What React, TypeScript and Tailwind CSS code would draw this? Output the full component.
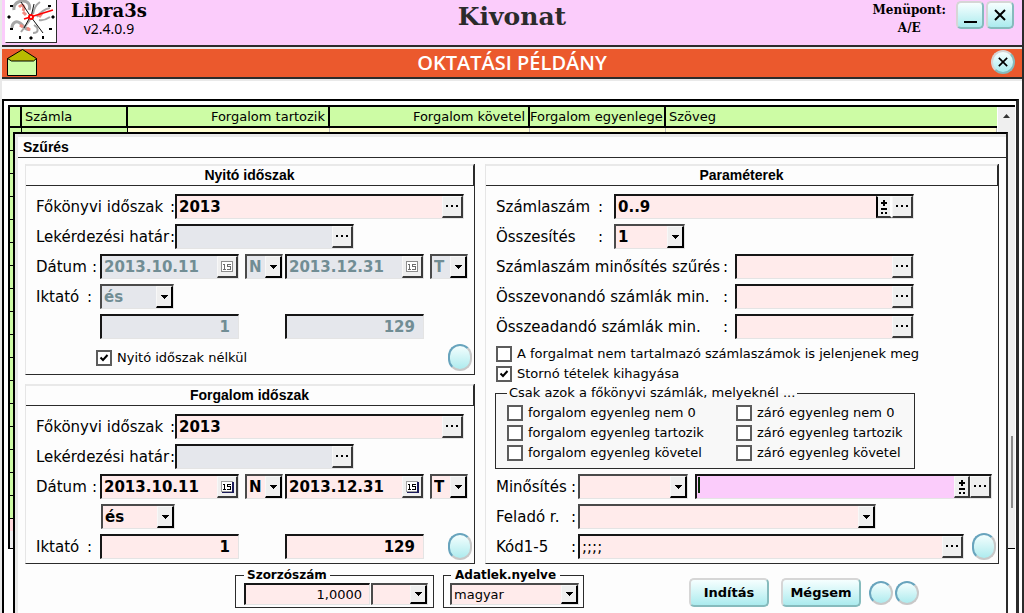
import React, { useId } from 'react';
import { clsx } from 'clsx';

const Glyph = {
  Dots: () => (
    <svg width="13" height="3" viewBox="0 0 13 3" fill="currentColor" shapeRendering="crispEdges">
      <path d="M0 0h2v2H0zM5 0h2v2H5zM10 0h2v2h-2z" />
    </svg>
  ),
  Calendar: ({ dim }: { dim?: boolean }) => (
    <svg width="13" height="12" viewBox="0 0 13 12" fill="none" shapeRendering="crispEdges">
      <rect x="0.5" y="0.5" width="11" height="10" fill="#fff" stroke={dim ? '#8c8c8c' : '#a0a0a0'} />
      {!dim && <path d="M1 11h11V1M11 1v10" stroke="#1b1b5a" />}
      <path
        d="M2 3.5h2M3.5 3v6M2 8.5h3M10 3.5H6.5V5.5H9.500V8.5H6"
        stroke={dim ? '#6d6d6d' : '#000'}
      />
    </svg>
  ),
  PlusMinus: () => (
    <svg width="8" height="16" viewBox="0 0 8 16" fill="currentColor" shapeRendering="crispEdges">
      <path d="M3 1h2v2h2v2H5v2H3V5H1V3h2zM1 9h6v2H1zM1 13h2v2H1zM5 13h2v2H5z" />
    </svg>
  ),
  Down: () => (
    <svg width="7" height="4" viewBox="0 0 7 4" fill="#000" shapeRendering="crispEdges">
      <path d="M0 0h7L3.5 4z" />
    </svg>
  ),
};

const raised =
  'flex items-center justify-center bg-[#efefef] border-t border-r-2 border-b-2 border-l border-t-[#f8f8f8] border-r-[#3a3a3a] border-b-[#3a3a3a] border-l-[#f8f8f8]';

const sunken =
  'flex h-[25px] shrink-0 border-t-2 border-l-2 border-r border-b border-t-[#161616] border-l-[#161616] border-r-[#e4e4e4] border-b-[#e4e4e4]';

type FieldProps = {
  label: string;
  id?: string;
  value?: string;
  kind?: 'plain' | 'dots' | 'date' | 'both';
  disabled?: boolean;
  right?: boolean;
  light?: boolean;
  active?: boolean;
  className?: string;
};

const Field: React.FC<FieldProps> = ({
  label,
  id,
  value = '',
  kind = 'plain',
  disabled,
  right,
  light,
  active,
  className,
}) => (
  <div
    className={clsx(
      sunken,
      disabled ? 'bg-[#e5e7ec]' : active ? 'bg-[#fbccfb]' : 'bg-[#ffebeb]',
      className,
    )}
  >
    <input
      id={id}
      aria-label={id ? undefined : label}
      defaultValue={value}
      disabled={disabled}
      className={clsx(
        'w-0 min-w-0 flex-1 bg-transparent pb-px text-[15px] outline-none',
        right ? 'pr-2 text-right' : 'pl-[2px]',
        !light && 'font-bold',
        disabled ? 'text-[#718d94]' : 'text-black',
        active ? 'mt-px ml-px h-4 border-l-2 border-[#062b06]' : 'h-full',
      )}
    />
    {kind === 'both' && (
      <button
        type="button"
        aria-label={`${label} +/-`}
        className={clsx(raised, 'w-4', !active && 'border-l-2 border-l-black border-r-white')}
      >
        <Glyph.PlusMinus />
      </button>
    )}
    {(kind === 'dots' || kind === 'both') && (
      <button type="button" aria-label={`${label} ...`} className={clsx(raised, 'w-[21px]')}>
        <Glyph.Dots />
      </button>
    )}
    {kind === 'date' && (
      <button
        type="button"
        aria-label={`${label} naptár`}
        disabled={disabled}
        className={clsx(raised, 'w-[21px]')}
      >
        <Glyph.Calendar dim={disabled} />
      </button>
    )}
  </div>
);

type DropProps = {
  label: string;
  id?: string;
  value?: string;
  disabled?: boolean;
  small?: boolean;
  className?: string;
};

const Drop: React.FC<DropProps> = ({ label, id, value = '', disabled, small, className }) => (
  <div
    className={clsx(
      'relative flex shrink-0 border-t-2 border-r border-b border-l-2 border-t-[#4a4a4a] border-r-[#e4e4e4] border-b-[#e4e4e4] border-l-[#4a4a4a]',
      disabled ? 'bg-[#e5e7ec]' : 'bg-[#ffebeb]',
      small ? 'h-[22px]' : 'h-[25px]',
      className,
    )}
  >
    <select
      id={id}
      aria-label={id ? undefined : label}
      disabled={disabled}
      className={clsx(
        'h-full w-full appearance-none bg-transparent pl-[2px] opacity-100 outline-none',
        small ? 'text-[13px]' : 'text-[15px] font-bold',
        disabled ? 'text-[#718d94]' : 'text-black',
      )}
    >
      <option>{value}</option>
    </select>
    <span
      className={clsx(
        raised,
        'pointer-events-none absolute inset-y-0 right-0 w-[17px] border-r-black border-b-black',
      )}
    >
      <Glyph.Down />
    </span>
  </div>
);

const Label: React.FC<{ htmlFor?: string; text: string; className?: string }> = ({
  htmlFor,
  text,
  className,
}) => (
  <label
    htmlFor={htmlFor}
    className={clsx(
      'flex shrink-0 justify-between pt-px text-[15px] leading-6 whitespace-nowrap',
      className,
    )}
  >
    <span>{text}</span>
    <span>:</span>
  </label>
);

const Check: React.FC<{ label: string; checked?: boolean }> = ({ label, checked }) => (
  <label className="flex h-5 items-center gap-[5px] text-[13px] whitespace-nowrap">
    <span className="grid shrink-0">
      <input
        type="checkbox"
        defaultChecked={checked}
        className="peer col-start-1 row-start-1 size-4 appearance-none border-2 border-[#5c5c5c] bg-white"
      />
      <svg
        viewBox="0 0 16 16"
        className="pointer-events-none invisible col-start-1 row-start-1 size-4 peer-checked:visible"
      >
        <path d="M4.500 7.500l2.500 2.500 4.500-5" fill="none" stroke="#000" strokeWidth="2" />
      </svg>
    </span>
    {label}
  </label>
);

const Round: React.FC<{ label: string; className?: string }> = ({ label, className }) => (
  <button
    type="button"
    aria-label={label}
    className={clsx(
      'w-6 shrink-0 rounded-full border-2 border-t-[#68a4bd] border-r-[#c8c8c8] border-b-[#c8c8c8] border-l-[#68a4bd] bg-gradient-to-b from-[#f3fefe] to-[#adebee]',
      className,
    )}
  />
);

const glossy =
  'border-2 border-t-[#d6d6d6] border-l-[#d6d6d6] border-r-[#86bbbd] border-b-[#86bbbd] bg-gradient-to-b from-[#f6ffff] to-[#abebee]';

const Panel: React.FC<{ title: string; children: React.ReactNode }> = ({ title, children }) => (
  <section className="flex flex-col border-r border-b border-l border-r-[#2b2b2b] border-b-[#2b2b2b] border-l-[#e6e6e6]">
    <h2 className="h-[22px] border-t-2 border-r border-b border-t-[#e9e9e9] border-r-[#2b2b2b] border-b-[#2b2b2b] text-center font-['Liberation_Sans',sans-serif] text-[14px] leading-[19px] font-bold">
      {title}
    </h2>
    <div className="flex flex-1 flex-col gap-[5px] pt-2 pl-[10px]">{children}</div>
  </section>
);

const Row: React.FC<{ children: React.ReactNode }> = ({ children }) => (
  <div className="flex h-[25px] items-center">{children}</div>
);

const PeriodRows: React.FC<{ disabled?: boolean }> = ({ disabled }) => {
  const id = useId();
  return (
    <>
      <Row>
        <Label htmlFor={`${id}-p`} text="Főkönyvi időszak" className="w-[139px]" />
        <Field id={`${id}-p`} label="Főkönyvi időszak" value="2013" kind="dots" className="w-[289px]" />
      </Row>
      <Row>
        <Label htmlFor={`${id}-l`} text="Lekérdezési határ" className="w-[139px]" />
        <Field id={`${id}-l`} label="Lekérdezési határ" kind="dots" disabled className="w-[179px]" />
      </Row>
      <Row>
        <Label htmlFor={`${id}-d`} text="Dátum" className="w-[61px]" />
        <Field
          id={`${id}-d`}
          label="Dátum"
          value="2013.10.11"
          kind="date"
          disabled={disabled}
          className="ml-[3px] w-[139px]"
        />
        <Drop label="Nyitó/napi" value="N" disabled={disabled} className="ml-[6px] w-[38px]" />
        <Field
          label="Dátum vége"
          value="2013.12.31"
          kind="date"
          disabled={disabled}
          className="ml-[2px] w-[139px]"
        />
        <Drop label="Tétel" value="T" disabled={disabled} className="ml-[6px] w-[38px]" />
      </Row>
    </>
  );
};

const Logo = () => (
  <svg viewBox="0 0 50 42" className="h-[42px] w-[50px]" fill="none">
    <rect width="50" height="42" fill="#fff" />
    <g stroke="#a6a6a6" strokeWidth="2">
      <path d="M8 10c-1-6 4-9 9-9s8 4 6 9" strokeWidth="3" />
      <path d="M6 28c0-5 4-8 8-5s6 8 10 6" strokeWidth="3" />
      <path d="M27 14c1-7 4-10 7-12M31 17c4-6 8-8 13-9M33 20c5 1 8-1 11-3" />
      <path d="M24 20l-9 12M28 25c5 3 5 8-1 8" />
    </g>
    <path d="M13 7c4-4 6 0 4 4M17 12l3 3M36 13l-3 4M14 25l3 2M21 28l3 2" stroke="#f28a80" strokeWidth="3" />
    <path d="M25 17L37 33M25 17L15 2M25 17l3-13M24 17l-6 11" stroke="#111" />
    <path d="M18 19L47 10" stroke="#f00" strokeWidth="1.500" />
    <circle cx="25" cy="17" r="2" fill="#fff" stroke="#f00" strokeWidth="2" />
    <g fill="#000">
      <path d="M1 17l2-2 2 2-2 2zM45 17l2-2 2 2-2 2zM23 38l2-2 2 2-2 2z" />
      <path d="M4 5h3v2H4zM42 5h3v2h-3zM4 28h3v2H4zM43 28h3v2h-3zM13 36h2v3h-2zM36 36h2v3h-2z" />
    </g>
  </svg>
);

const Envelope = () => (
  <svg width="30" height="28" viewBox="0 0 30 28" stroke="#000">
    <path d="M.5 9.500h29v17H.5z" fill="#cdfca5" />
    <path d="M.5 9.500L15.500 .5l14 9-3 2.500h-22z" fill="#b8bb00" />
  </svg>
);

const Cross: React.FC<{ size: string }> = ({ size }) => (
  <svg viewBox="0 0 12 12" className={size}>
    <path d="M1 1l10 10M11 1L1 11" stroke="#000" strokeWidth="2" />
  </svg>
);

const columns = [
  { title: '', className: 'w-[12px]' },
  { title: 'Számla', className: 'w-[106px] pl-[3px] text-left' },
  { title: 'Forgalom tartozik', className: 'w-[202px] pr-[3px] text-right' },
  { title: 'Forgalom követel', className: 'w-[200px] pr-[3px] text-right' },
  { title: 'Forgalom egyenlege', className: 'w-[136px] text-left' },
  { title: 'Szöveg', className: 'pl-[3px] text-left' },
];

const bookRows = Array.from({ length: 17 }, (_, i) => i);

const AccountTable = () => (
  <table className="w-full table-fixed border-separate border-spacing-0 text-[13px]">
    <thead>
      <tr className="h-[21px] bg-[#cdfca5]">
        {columns.map((col, i) => (
          <th
            key={i}
            className={clsx(
              'overflow-hidden border-b-2 border-black p-0 pt-px leading-[18px] font-normal whitespace-nowrap',
              i < columns.length - 1 && 'border-r-2',
              col.className,
            )}
          >
            {col.title}
          </th>
        ))}
      </tr>
    </thead>
    <tbody>
      {bookRows.map((row) => (
        <tr key={row} className="h-[23px]">
          {columns.map((col, i) => (
            <td
              key={i}
              className={clsx(
                'border-b border-b-black p-0',
                i < 2 ? 'border-r border-r-black bg-[#cdfca5]' : 'border-r border-r-[#bdbdbd] bg-[#ffffd2]',
              )}
            />
          ))}
        </tr>
      ))}
    </tbody>
  </table>
);

const Header = () => (
  <header className="grid h-[47px] grid-cols-[1fr_auto_1fr] items-start border-b-2 border-[#2b2b2b] bg-[#fbccfb]">
    <div className="flex">
      <div className="ml-[3px] border-r border-b border-l border-r-[#2b2b2b] border-b-[#2b2b2b] border-l-white">
        <Logo />
      </div>
      <div className="ml-[14px] text-center">
        <h1 className="font-['DejaVu_Serif',serif] text-[18px] leading-[22px] font-bold">Libra3s</h1>
        <p className="font-['Noto_Sans',sans-serif] text-[14px] leading-[14px]">v2.4.0.9</p>
      </div>
    </div>
    <h2 className="font-['DejaVu_Serif',serif] text-[25px] leading-[34px] font-bold text-[#2b2b2b]">
      Kivonat
    </h2>
    <div className="flex justify-end gap-[2px] pr-[8px]">
      <p className="mr-[8px] pt-px text-center font-['DejaVu_Serif',serif] text-[12px] leading-[18px] font-bold">
        Menüpont:
        <br />
        A/E
      </p>
      <button
        type="button"
        aria-label="Kis méret"
        className={clsx(glossy, 'mt-px flex h-7 w-7 items-end justify-center rounded-[5px] pb-1')}
      >
        <span className="h-[2px] w-[13px] bg-black" />
      </button>
      <button
        type="button"
        aria-label="Bezárás"
        className={clsx(glossy, 'mt-px flex h-7 w-7 items-center justify-center rounded-[5px]')}
      >
        <Cross size="size-3" />
      </button>
    </div>
  </header>
);

const Banner = () => (
  <div className="grid h-8 grid-cols-[1fr_auto_1fr] border-t-2 border-b-2 border-t-[#e9e9e9] border-b-[#2b2b2b] bg-[#eb592d]">
    <div className="pl-[5px]">
      <Envelope />
    </div>
    <strong className="font-['Open_Sans',sans-serif] text-[20px] leading-[27px] font-semibold text-white">
      OKTATÁSI PÉLDÁNY
    </strong>
    <div className="flex justify-end pt-px pr-[7px]">
      <button
        type="button"
        aria-label="Sáv bezárása"
        className={clsx(glossy, 'flex size-6 items-center justify-center rounded-full')}
      >
        <Cross size="size-[10px]" />
      </button>
    </div>
  </div>
);

const Parameters = () => {
  const id = useId();
  return (
    <Panel title="Paraméterek">
      <Row>
        <Label htmlFor={`${id}-a`} text="Számlaszám" className="w-[107px]" />
        <Field
          id={`${id}-a`}
          label="Számlaszám"
          value="0..9"
          kind="both"
          className="ml-[11px] w-[300px]"
        />
      </Row>
      <Row>
        <Label htmlFor={`${id}-b`} text="Összesítés" className="w-[107px]" />
        <Drop id={`${id}-b`} label="Összesítés" value="1" className="ml-[11px] w-[71px]" />
      </Row>
      <Row>
        <Label htmlFor={`${id}-c`} text="Számlaszám minősítés szűrés" className="w-[232px]" />
        <Field id={`${id}-c`} label="Számlaszám minősítés szűrés" kind="dots" className="ml-[7px] w-[179px]" />
      </Row>
      <Row>
        <Label htmlFor={`${id}-d`} text="Összevonandó számlák min." className="w-[232px]" />
        <Field id={`${id}-d`} label="Összevonandó számlák min." kind="dots" className="ml-[7px] w-[179px]" />
      </Row>
      <Row>
        <Label htmlFor={`${id}-e`} text="Összeadandó számlák min." className="w-[232px]" />
        <Field id={`${id}-e`} label="Összeadandó számlák min." kind="dots" className="ml-[7px] w-[179px]" />
      </Row>
      <div>
        <Check label="A forgalmat nem tartalmazó számlaszámok is jelenjenek meg" />
        <Check label="Stornó tételek kihagyása" checked />
        <fieldset className="-ml-px h-[85px] w-[419px] border border-[#2b2b2b] bg-[#f8f8f8] px-[11px] pt-px">
          <legend className="h-[18px] px-[2px] text-[13px] leading-[18px]">
            Csak azok a főkönyvi számlák, melyeknél ...
          </legend>
          <div className="grid grid-cols-[229px_auto]">
            <Check label="forgalom egyenleg nem 0" />
            <Check label="záró egyenleg nem 0" />
            <Check label="forgalom egyenleg tartozik" />
            <Check label="záró egyenleg tartozik" />
            <Check label="forgalom egyenleg követel" />
            <Check label="záró egyenleg követel" />
          </div>
        </fieldset>
      </div>
      <Row>
        <Label htmlFor={`${id}-f`} text="Minősítés" className="w-[80px]" />
        <Drop id={`${id}-f`} label="Minősítés" className="ml-[2px] w-[110px]" />
        <Field label="Minősítés értéke" kind="both" active className="ml-[7px] w-[297px]" />
      </Row>
      <Row>
        <Label htmlFor={`${id}-g`} text="Feladó r." className="w-[80px]" />
        <Drop id={`${id}-g`} label="Feladó r." className="ml-[2px] w-[298px]" />
      </Row>
      <Row>
        <Label htmlFor={`${id}-h`} text="Kód1-5" className="w-[80px]" />
        <Field id={`${id}-h`} label="Kód1-5" value=";;;;" kind="dots" light className="ml-[2px] w-[386px]" />
        <Round label="Paraméterek törlése" className="ml-2 h-[27px]" />
      </Row>
    </Panel>
  );
};

const Footer = () => (
  <div className="mt-[3px] flex items-start pl-[210px]">
    <fieldset className="flex h-[41px] w-[199px] border border-[#2b2b2b] pl-2">
      <legend className="h-4 px-[3px] text-[12px] leading-4 font-bold">Szorzószám</legend>
      <div className="flex">
        <div className="flex h-[22px] w-[126px] border-t-2 border-r border-b border-l-2 border-t-[#161616] border-r-[#e4e4e4] border-b-[#e4e4e4] border-l-[#161616] bg-[#ffebeb]">
          <input
            aria-label="Szorzószám"
            defaultValue="1,0000"
            className="w-full bg-transparent pr-[7px] text-right text-[13px] outline-none"
          />
        </div>
        <Drop label="Szorzószám egysége" small className="ml-px w-[57px]" />
      </div>
    </fieldset>
    <fieldset className="ml-[9px] flex h-[41px] w-[141px] border border-[#2b2b2b] pl-[6px]">
      <legend className="ml-[1px] h-4 px-[4px] text-[12px] leading-4 font-bold">Adatlek.nyelve</legend>
      <Drop label="Adatlek.nyelve" value="magyar" small className="w-[129px]" />
    </fieldset>
    <div className="ml-[105px] flex items-center gap-3 pt-[11px]">
      {['Indítás', 'Mégsem'].map((text) => (
        <button
          key={text}
          type="button"
          className={clsx(glossy, 'h-[29px] w-20 rounded-[5px] text-[13px] font-bold')}
        >
          {text}
        </button>
      ))}
      <div className="-ml-1 flex gap-[2px]">
        <Round label="Mentés" className="h-6" />
        <Round label="Betöltés" className="h-6" />
      </div>
    </div>
  </div>
);

// Floats over the account list, below the two title bars
const FilterDialog = () => {
  const id = useId();
  return (
    <div
      role="dialog"
      aria-label="Szűrés"
      className="absolute top-[51px] right-[14px] bottom-0 left-[11px] overflow-hidden border-t-2 border-r-2 border-l-2 border-t-black border-r-[#2b2b2b] border-l-black bg-[#fdfdfd]"
    >
      <div className="min-h-full border-t-3 border-l-3 border-[#e9e9e9]">
        <h2 className="h-[21px] border-b border-[#2b2b2b] pl-[5px] font-['Liberation_Sans',sans-serif] text-[14px] leading-[20px] font-bold">
          Szűrés
        </h2>
        <form className="px-[7px] pt-[6px]">
          <div className="grid grid-cols-[450fr_514fr] gap-[10px]">
            <div className="grid grid-rows-[211px_180px] gap-[9px]">
              <Panel title="Nyitó időszak">
                <PeriodRows disabled />
                <Row>
                  <Label htmlFor={`${id}-i`} text="Iktató" className="w-[56px]" />
                  <Drop id={`${id}-i`} label="Iktató" value="és" disabled className="ml-[8px] w-[74px]" />
                </Row>
                <Row>
                  <Field label="Iktató tól" value="1" right disabled className="ml-[64px] w-[139px]" />
                  <Field label="Iktató ig" value="129" right disabled className="ml-[46px] w-[139px]" />
                </Row>
                <div className="flex items-center justify-between pr-[2px] pl-[60px]">
                  <Check label="Nyitó időszak nélkül" checked />
                  <Round label="Nyitó időszak törlése" className="h-[27px]" />
                </div>
              </Panel>
              <Panel title="Forgalom időszak">
                <PeriodRows />
                <Row>
                  <Drop label="Iktató kapcsolat" value="és" className="ml-[65px] w-[74px]" />
                </Row>
                <Row>
                  <Label htmlFor={`${id}-j`} text="Iktató" className="w-[56px]" />
                  <Field id={`${id}-j`} label="Iktató tól" value="1" right className="ml-[8px] w-[139px]" />
                  <Field label="Iktató ig" value="129" right className="ml-[46px] w-[139px]" />
                  <Round label="Forgalom időszak törlése" className="mr-[2px] ml-auto h-[27px]" />
                </Row>
              </Panel>
            </div>
            <Parameters />
          </div>
          <Footer />
        </form>
      </div>
    </div>
  );
};

const App: React.FC = () => (
  <div className="flex h-screen flex-col overflow-hidden border-r-2 border-l-2 border-r-[#2b2b2b] border-l-[#e9e9e9] bg-white font-['DejaVu_Sans',Verdana,sans-serif] text-black">
    <Header />
    <Banner />
    <main className="relative flex min-h-0 flex-1 flex-col border-t-2 border-[#e9e9e9] pt-[18px] pr-[3px]">
      <div className="min-h-0 flex-1 overflow-hidden border-t-2 border-r-3 border-l-2 border-t-black border-r-[#2b2b2b] border-l-black pt-1 pl-1">
        <div className="mr-px flex h-[444px] border-t-2 border-b border-l-2 border-black">
          <div className="min-w-0 flex-1 bg-[#efefef]">
            <AccountTable />
            <div className="h-3 bg-[#ffd9dc]" />
          </div>
          <div className="flex w-[18px] flex-col items-center border-l border-white bg-[#efefef]">
            <svg width="7" height="4" viewBox="0 0 7 4" className="mt-[7px]">
              <path d="M0 4L3.500 0 7 4z" fill="#333" />
            </svg>
            <div className="mt-[318px] h-[72px] w-[15px] self-start border-r-2 border-[#8a8a8a]" />
          </div>
        </div>
      </div>
      <FilterDialog />
    </main>
  </div>
);

export default App;
